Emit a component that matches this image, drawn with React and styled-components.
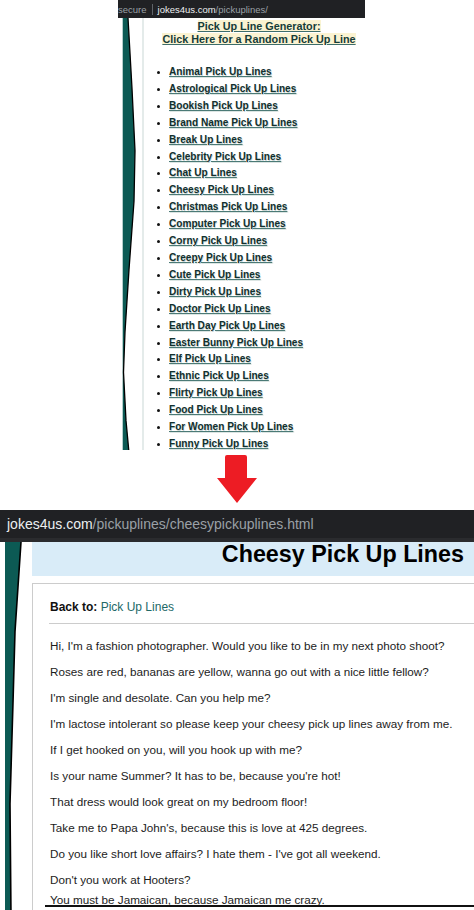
import React from "react";
import styled, { createGlobalStyle } from "styled-components";

const Global = createGlobalStyle`
  html, body { margin: 0; padding: 0; height: 910px; overflow: hidden; background: #ffffff; }
  body { font-family: "Liberation Sans", Arial, sans-serif; }
  #root { width: 474px; height: 910px; }
`;

const Page = styled.div`
  display: flex;
  flex-direction: column;
  width: 474px;
  height: 910px;
  overflow: hidden;
  & > * { flex-shrink: 0; }
`;

/* ---------- top (small) screenshot ---------- */
const TopShot = styled.section`
  margin-left: 118px;
  width: 247px;
  display: flex;
  flex-direction: column;
`;

const AddressBar = styled.div`
  flex-shrink: 0;
  display: flex;
  align-items: center;
  height: ${(p) => p.$h}px;
  padding-left: ${(p) => p.$pad}px;
  background: #202124;
  font-family: "Liberation Sans", Arial, sans-serif;
  font-size: ${(p) => p.$size}px;
  white-space: nowrap;
  overflow: hidden;
  box-sizing: border-box;
  border-bottom: ${(p) => (p.$edge ? "4px solid #2a2b2e" : "none")};
`;

const Host = styled.span`
  color: #eceff1;
`;
const Path = styled.span`
  color: #9aa0a6;
`;
const Secure = styled.span`
  color: #9aa0a6;
`;
const Sep = styled.span`
  display: inline-block;
  width: 1px;
  height: 11px;
  background: #5f6368;
  margin: 0 5px 0 5px;
`;

const TopBody = styled.div`
  flex-shrink: 0;
  display: grid;
  grid-template-columns: 24px 2px 1fr;
  height: 432px;
  overflow: hidden;
  background: #fff;
`;

const StripCell = styled.div`
  position: relative;
  svg { display: block; width: 100%; height: 100%; }
`;

const Divider = styled.div`
  background: #e4ebea;
`;

const TopContent = styled.div`
  padding-top: 1.5px;
  font-family: "Liberation Sans", Arial, sans-serif;
  font-weight: bold;
`;

const TitleBlock = styled.div`
  text-align: center;
  padding-left: 9px;
  font-size: 10.8px;
  line-height: 13px;
`;

const TitleLink = styled.a`
  color: #163c39;
  background: #fbf3d2;
  text-decoration: underline;
  text-decoration-color: #3d6d6a;
`;

const LinkList = styled.ul`
  margin: 18.5px 0 0 0;
  padding-left: 25px;
  list-style: disc;
  font-size: 10.1px;
  line-height: 16.9px;
  li::marker { color: #111; font-size: 9px; }
`;

const ListLink = styled.a`
  color: #12302e;
  text-decoration: underline;
  text-decoration-color: #4b7a76;
  text-shadow: 0.6px 0.6px 0 rgba(150, 175, 172, 0.55);
`;

/* ---------- arrow ---------- */
const ArrowRow = styled.div`
  height: 60px;
  display: flex;
  justify-content: center;
  align-items: flex-start;
  padding-top: 5px;
  box-sizing: border-box;
`;

/* ---------- bottom (large) screenshot ---------- */
const BottomShot = styled.section`
  position: relative;
  height: 400px;
  display: flex;
  flex-direction: column;
  overflow: hidden;
`;

const BottomBody = styled.div`
  flex-shrink: 0;
  height: 368px;
  display: grid;
  grid-template-columns: 32px 1fr;
  background: #fff;
`;

const Main = styled.div`
  display: flex;
  flex-direction: column;
  gap: 7px;
  min-width: 0;
`;

const HeaderBand = styled.div`
  flex-shrink: 0;
  height: 34px;
  background: #d9ecf8;
  display: flex;
  justify-content: flex-end;
  padding-right: 10px;
`;

const Heading = styled.h1`
  margin: 0;
  font-family: "Liberation Sans", Arial, sans-serif;
  font-size: 23.3px;
  line-height: 24px;
  font-weight: bold;
  color: #000;
  white-space: nowrap;
`;

const ContentBox = styled.div`
  flex-shrink: 0;
  border-top: 1px solid #cccccc;
  border-left: 1px solid #cccccc;
  padding: 13px 0 0 17px;
  font-family: "Liberation Sans", Arial, sans-serif;
  font-size: 11.7px;
  color: #1c1c1c;
`;

const BackLine = styled.div`
  font-size: 12px;
  line-height: 20px;
  strong { color: #111; }
`;

const BackLink = styled.a`
  color: #226967;
  text-decoration: none;
`;

const Rule = styled.hr`
  border: none;
  border-top: 1px solid #cccccc;
  margin: 6px 0 11.7px -1px;
`;

const Line = styled.p`
  margin: 0 0 6px 0;
  line-height: 20px;
  white-space: nowrap;
`;

const ScreenEdge = styled.div`
  position: absolute;
  left: 45px;
  right: 0;
  bottom: 3px;
  height: 2px;
  background: #111;
`;

const categories = [
  "Animal Pick Up Lines",
  "Astrological Pick Up Lines",
  "Bookish Pick Up Lines",
  "Brand Name Pick Up Lines",
  "Break Up Lines",
  "Celebrity Pick Up Lines",
  "Chat Up Lines",
  "Cheesy Pick Up Lines",
  "Christmas Pick Up Lines",
  "Computer Pick Up Lines",
  "Corny Pick Up Lines",
  "Creepy Pick Up Lines",
  "Cute Pick Up Lines",
  "Dirty Pick Up Lines",
  "Doctor Pick Up Lines",
  "Earth Day Pick Up Lines",
  "Easter Bunny Pick Up Lines",
  "Elf Pick Up Lines",
  "Ethnic Pick Up Lines",
  "Flirty Pick Up Lines",
  "Food Pick Up Lines",
  "For Women Pick Up Lines",
  "Funny Pick Up Lines",
];

const lines = [
  "Hi, I'm a fashion photographer. Would you like to be in my next photo shoot?",
  "Roses are red, bananas are yellow, wanna go out with a nice little fellow?",
  "I'm single and desolate. Can you help me?",
  "I'm lactose intolerant so please keep your cheesy pick up lines away from me.",
  "If I get hooked on you, will you hook up with me?",
  "Is your name Summer? It has to be, because you're hot!",
  "That dress would look great on my bedroom floor!",
  "Take me to Papa John's, because this is love at 425 degrees.",
  "Do you like short love affairs? I hate them - I've got all weekend.",
];

const TopStrip = () => (
  <svg viewBox="0 0 24 432" preserveAspectRatio="none">
    <polygon
      points="4.7,0 10,0 14,70 17,132 16,182 11,250 7,312 5.5,352 8,400 11,432 4.7,432"
      fill="#0c5a54"
    />
    <polyline
      points="10,0 14,70 17,132 16,182 11,250 7,312 5.5,352 8,400 11,432"
      fill="none"
      stroke="#000"
      strokeWidth="1.3"
    />
  </svg>
);

const BottomStrip = () => (
  <svg viewBox="0 0 32 368" preserveAspectRatio="none">
    <polygon
      points="5,0 21,0 15,88 13,158 10,258 11,368 5,368"
      fill="#0c5a54"
    />
    <polyline
      points="21,0 15,88 13,158 10,258 11,368"
      fill="none"
      stroke="#000"
      strokeWidth="1.6"
    />
  </svg>
);

const DownArrow = () => (
  <svg width="40" height="48" viewBox="0 0 40 48">
    <path d="M10 0 H28 Q30 0 30 2 V23 H40 L20 48 L0 23 H8 V2 Q8 0 10 0 Z" fill="#ed1c24" />
  </svg>
);

export default function App() {
  return (
    <>
      <Global />
      <Page>
        <TopShot>
          <AddressBar $h={18} $pad={0} $size={9.5}>
            <Secure>secure</Secure>
            <Sep />
            <Host>jokes4us.com</Host>
            <Path>/pickuplines/</Path>
          </AddressBar>
          <TopBody>
            <StripCell>
              <TopStrip />
            </StripCell>
            <Divider />
            <TopContent>
              <TitleBlock>
                <TitleLink href="#">Pick Up Line Generator:</TitleLink>
                <br />
                <TitleLink href="#">Click Here for a Random Pick Up Line</TitleLink>
              </TitleBlock>
              <LinkList>
                {categories.map((c) => (
                  <li key={c}>
                    <ListLink href="#">{c}</ListLink>
                  </li>
                ))}
              </LinkList>
            </TopContent>
          </TopBody>
        </TopShot>

        <ArrowRow>
          <DownArrow />
        </ArrowRow>

        <BottomShot>
          <AddressBar $h={32} $pad={7} $size={14} $edge>
            <Host>jokes4us.com</Host>
            <Path>/pickuplines/cheesypickuplines.html</Path>
          </AddressBar>
          <BottomBody>
            <StripCell>
              <BottomStrip />
            </StripCell>
            <Main>
              <HeaderBand>
                <Heading>Cheesy Pick Up Lines</Heading>
              </HeaderBand>
              <ContentBox>
                <BackLine>
                  <strong>Back to:</strong> <BackLink href="#">Pick Up Lines</BackLink>
                </BackLine>
                <Rule />
                {lines.map((l) => (
                  <Line key={l}>{l}</Line>
                ))}
                <Line>
                  Don't you work at Hooters?
                  <br />
                  You must be Jamaican, because Jamaican me crazy.
                </Line>
              </ContentBox>
            </Main>
          </BottomBody>
          <ScreenEdge />
        </BottomShot>
      </Page>
    </>
  );
}
